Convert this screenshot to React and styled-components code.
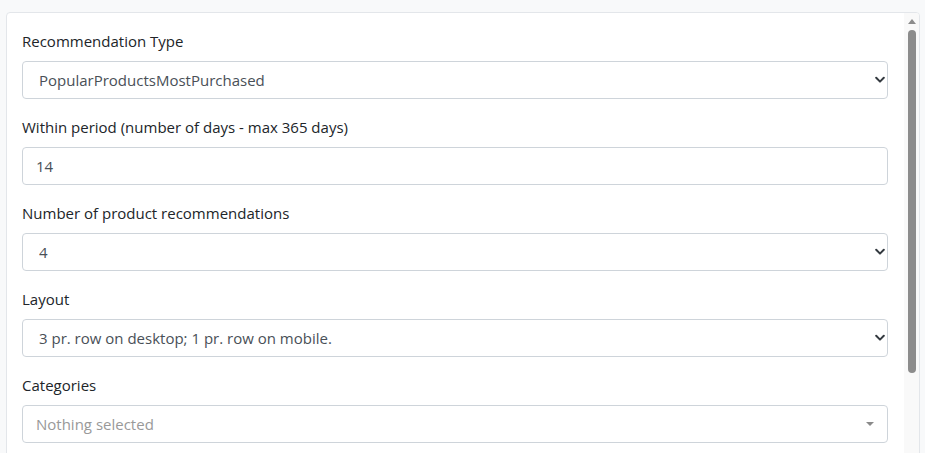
import React from 'react';
import styled, { createGlobalStyle } from 'styled-components';

// * ----------- STYLE ---------- *
const GlobalStyle = createGlobalStyle`
  html, body {
    margin: 0;
    padding: 0;
    background: #f8f9fa;
    overflow: hidden;
  }
  body {
    font-family: "Open Sans", "Noto Sans", Arial, sans-serif;
    color: #212529;
  }
  * { box-sizing: border-box; }
`;

const Page = styled.div`
  padding: 12px 5px 0 6px;
`;

const Card = styled.div`
  display: flex;
  height: 460px;
  background: #ffffff;
  border: 1px solid #e3e6ea;
  border-radius: 4px;
  overflow: hidden;
`;

const Body = styled.div`
  flex: 1;
  padding: 16px 16px 0 15px;
`;

// fake vertical scrollbar of the card
const ScrollRail = styled.div`
  width: 15px;
  flex-shrink: 0;
  display: flex;
  flex-direction: column;
  align-items: center;
  background: #f9f9f9;
`;

const ScrollArrow = styled.div`
  height: 16px;
  display: flex;
  align-items: center;
  justify-content: center;
  padding-top: 1px;

  &::before {
    content: '';
    width: 0;
    height: 0;
    border-bottom: 5px solid #8c8c8c;
    border-left: 4px solid transparent;
    border-right: 4px solid transparent;
  }
`;

const ScrollThumb = styled.div`
  width: 8px;
  height: ${props => props.$size}px;
  margin-top: 1px;
  background: #8c8c8c;
  border-radius: 4px;
`;

const Group = styled.div`
  margin-bottom: 16px;
`;

const Label = styled.label`
  display: block;
  font-size: 15px;
  line-height: 24px;
  margin-bottom: 8px;
  color: #212529;
`;

const Field = styled.div`
  position: relative;
`;

const Select = styled.select`
  display: block;
  width: 100%;
  height: 38px;
  padding: 0 24px 0 16px;
  font-family: inherit;
  font-size: 15px;
  color: #495057;
  background: #ffffff;
  border: 1px solid #ced4da;
  border-radius: 4px;
  appearance: none;
  outline: 0;
`;

const Input = styled.input`
  display: block;
  width: 100%;
  height: 38px;
  padding: 0 13px;
  font-family: inherit;
  font-size: 15px;
  color: #495057;
  background: #ffffff;
  border: 1px solid #ced4da;
  border-radius: 4px;
  outline: 0;
`;

const Chevron = styled.svg`
  position: absolute;
  right: 3px;
  top: 50%;
  margin-top: -4px;
  pointer-events: none;
`;

const PickerButton = styled.button`
  display: flex;
  align-items: center;
  justify-content: space-between;
  width: 100%;
  height: 38px;
  padding: 0 13px;
  font-family: inherit;
  font-size: 15px;
  color: ${props => (props.$placeholder ? '#999999' : '#495057')};
  background: #ffffff;
  border: 1px solid #ced4da;
  border-radius: 4px;
  text-align: left;
  cursor: pointer;
`;

const Caret = styled.span`
  width: 0;
  height: 0;
  border-top: 4px solid #8a8a8a;
  border-left: 4px solid transparent;
  border-right: 4px solid transparent;
`;

const ArrowDown = () => (
  <Chevron width="10" height="8" viewBox="0 0 10 8">
    <path d="M1.2 1.8 L5 5.6 L8.8 1.8" fill="none" stroke="#343a40" strokeWidth="2" strokeLinecap="round" strokeLinejoin="round" />
  </Chevron>
);

const SelectField = ({ label, value, options }) => (
  <Group>
    <Label>{label}</Label>
    <Field>
      <Select defaultValue={value}>
        {options.map(o => <option key={o} value={o}>{o}</option>)}
      </Select>
      <ArrowDown />
    </Field>
  </Group>
);

const App = () => {
  return (
    <Page>
      <GlobalStyle />
      <Card>
        <Body>
          <SelectField
            label="Recommendation Type"
            value="PopularProductsMostPurchased"
            options={['PopularProductsMostPurchased', 'PopularProductsMostViewed', 'RelatedProducts']}
          />
          <Group>
            <Label>Within period (number of days - max 365 days)</Label>
            <Input type="text" defaultValue="14" />
          </Group>
          <SelectField
            label="Number of product recommendations"
            value="4"
            options={['2', '3', '4', '6', '8', '12']}
          />
          <SelectField
            label="Layout"
            value="3 pr. row on desktop; 1 pr. row on mobile."
            options={['3 pr. row on desktop; 1 pr. row on mobile.', '4 pr. row on desktop; 2 pr. row on mobile.']}
          />
          <Group>
            <Label>Categories</Label>
            <PickerButton $placeholder>
              <span>Nothing selected</span>
              <Caret />
            </PickerButton>
          </Group>
        </Body>
        <ScrollRail>
          <ScrollArrow />
          <ScrollThumb $size={343} />
        </ScrollRail>
      </Card>
    </Page>
  );
};

export default App;
